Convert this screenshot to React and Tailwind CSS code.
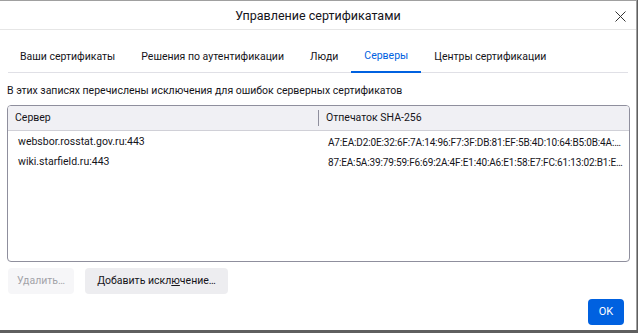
const tabs = [
  'Ваши сертификаты',
  'Решения по аутентификации',
  'Люди',
  'Серверы',
  'Центры сертификации',
];

const rows = [
  {
    server: 'websbor.rosstat.gov.ru:443',
    hash: 'A7:EA:D2:0E:32:6F:7A:14:96:F7:3F:DB:81:EF:5B:4D:10:64:B5:0B:4A:…',
  },
  {
    server: 'wiki.starfield.ru:443',
    hash: '87:EA:5A:39:79:59:F6:69:2A:4F:E1:40:A6:E1:58:E7:FC:61:13:02:B1:E…',
  },
];

const App = () => {
  return (
    <div
      className="w-[638px] h-[333px] bg-[#5f5f5f] overflow-hidden flex flex-col text-[10.5px] text-[#15141a]"
      style={{ fontFamily: 'Roboto, "Noto Sans", sans-serif' }}
    >
      <div className="h-[330px] w-[637px] shrink-0 bg-white border-r border-t border-[#a0a0a0] flex flex-col">
        {/* title bar */}
        <div className="h-[29px] shrink-0 flex items-center justify-center relative border-b border-[#e6e6e6]">
          <span className="text-[12.5px] mt-[2px]">Управление сертификатами</span>
          <svg
            className="absolute right-[10px] top-[10px]"
            width="11"
            height="11"
            viewBox="0 0 11 11"
          >
            <path d="M0.5 0.5L10.5 10.5M10.5 0.5L0.5 10.5" stroke="#333" strokeWidth="1" />
          </svg>
        </div>

        {/* tabs */}
        <div className="mt-[15px] mx-[8px] flex border-b border-[#e0e0e6] h-[28px]">
          {tabs.map((tab, i) => (
            <div
              key={tab}
              className={
                i === 3
                  ? 'px-[13px] pb-[7px] flex items-end text-[#0061e0] border-b-2 border-[#0061e0] mb-[-1px]'
                  : i === 0
                  ? 'pl-[12px] pr-[13px] pb-[7px] flex items-end'
                  : 'px-[13px] pb-[7px] flex items-end'
              }
            >
              {tab}
            </div>
          ))}
        </div>

        <div className="mt-[10px] ml-[7px] leading-[16px]">
          В этих записях перечислены исключения для ошибок серверных сертификатов
        </div>

        {/* table */}
        <div className="mt-[6px] ml-[7px] w-[623px] h-[157px] border border-[#8f8f9d] rounded-[4px] overflow-hidden">
          <div className="h-[25px] bg-[#f0f0f4] border-b border-[#d0d0d7] flex items-center">
            <div className="w-[311px] shrink-0 pl-[7px] border-r border-[#8f8f9d] h-[16px] leading-[16px]">Сервер</div>
            <div className="pl-[7px] leading-[16px]">Отпечаток SHA-256</div>
          </div>
          {rows.map((r, i) => (
            <div key={r.server} className={i === 0 ? 'h-[20px] flex items-center mt-[1px]' : 'h-[20px] flex items-center'}>
              <div className="w-[311px] shrink-0 pl-[10px]">{r.server}</div>
              <div className="pl-[9px] whitespace-nowrap text-[10px] tracking-[-0.15px]">{r.hash}</div>
            </div>
          ))}
        </div>

        {/* buttons */}
        <div className="mt-[6px] ml-[8px] flex gap-[11px]">
          <button className="h-[26px] w-[66px] rounded-[4px] bg-[#f6f6f8] text-[#a3a3a8]">
            Удалить…
          </button>
          <button className="h-[26px] w-[143px] rounded-[4px] bg-[#ededf0]">
            Добавить искл<span className="underline">ю</span>чение…
          </button>
        </div>

        <div className="mt-[5px] mr-[12px] flex justify-end">
          <button className="h-[26px] w-[36px] rounded-[4px] bg-[#0061e0] text-white text-[11px]">OK</button>
        </div>
      </div>
    </div>
  );
};

export default App;
